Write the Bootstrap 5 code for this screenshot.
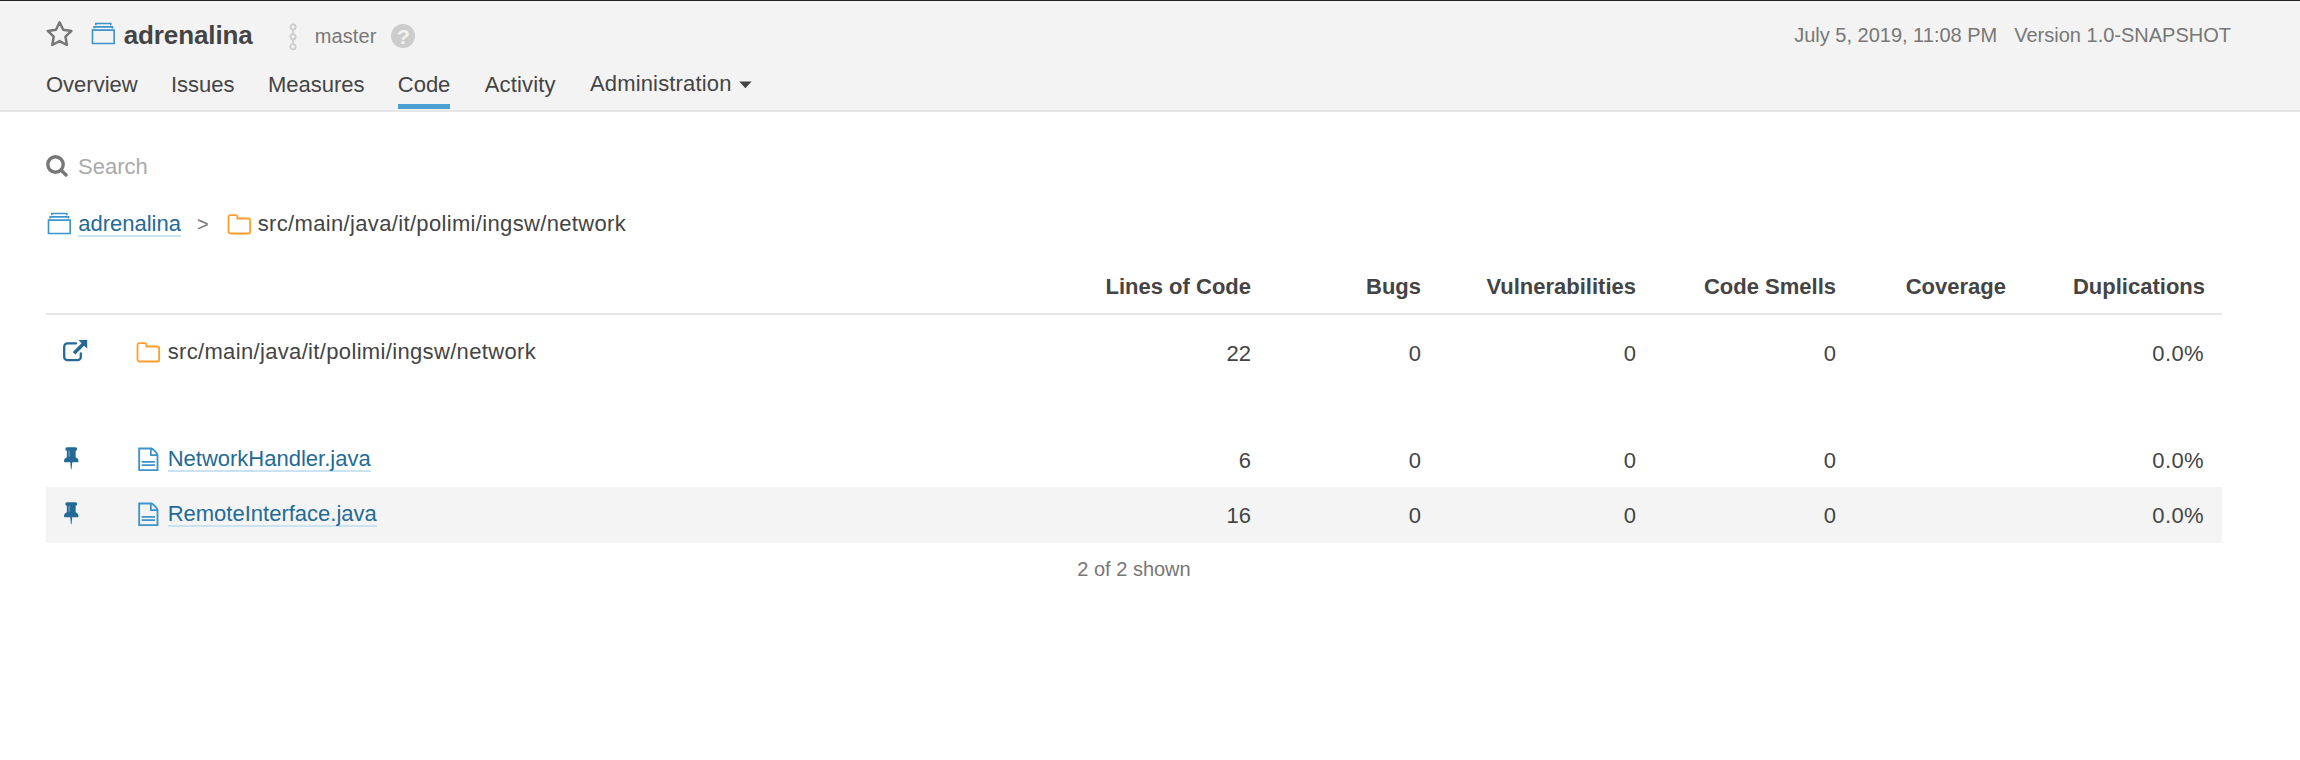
<!DOCTYPE html>
<html lang="en">
<head>
<meta charset="utf-8">
<title>adrenalina - Code</title>
<link rel="stylesheet" href="https://cdn.jsdelivr.net/npm/bootstrap@5.3.0/dist/css/bootstrap.min.css">
<script src="https://cdn.jsdelivr.net/npm/bootstrap@5.3.0/dist/js/bootstrap.bundle.min.js"></script>
<style>
body{font-family:"Liberation Sans",Arial,sans-serif;font-size:22px;line-height:26px;color:#444;background:#fff}
svg{display:block;flex:none}
.ico{width:26.67px;height:26.67px}
.project-bar{height:112px;background:#f3f3f3;border-top:1px solid #222;border-bottom:2px solid #e6e6e6;padding:0 69px 0 46px}
.top-line{height:71px;padding-top:19px}
.project-ico{margin:1px 0 0 16px}
.project-name{font-size:26px;line-height:30px;font-weight:700;letter-spacing:-.1px;margin-left:7px}
.quiet{color:#777;font-size:20px}
.branch{margin:3px 0 0 35px}
.branch-name{margin:3px 0 0 17px;letter-spacing:.1px}
.help-dot{width:24px;height:24px;margin:4px 0 0 15px;background:#ccc;color:#f3f3f3;font-size:21px;font-weight:700;line-height:25px}
.analysis{margin-top:2px;gap:17px}
.tabs{gap:33.3px}
.tabs .nav-link{color:#444;padding:0;height:37px;border-bottom:5px solid transparent;white-space:nowrap}
.tabs .nav-link.active{border-color:#4b9fd5}
.tabs .loose{letter-spacing:.16px;margin-left:1px}
.content{padding:42px 78px 0 46px}
.search-box span{color:#aaa;margin-left:10px}
.crumbs{margin-top:31px;height:26px}
.crumbs .sep{margin:0 17px 0 16px}
.crumbs .name-text{margin-left:5.5px}
.dir-path{letter-spacing:.34px}
.file-link{color:#236a97;text-decoration:none;border-bottom:2px solid #cae3f2;height:26px}
.measures{margin:16px 0 0;table-layout:fixed}
.measures>:not(caption)>*>*{padding:0 17px 0 0;border:0;color:#444;background:transparent;text-align:right;white-space:nowrap;vertical-align:top}
.measures>thead>tr>th{height:61px;border-bottom:2px solid #e6e6e6;padding-top:21px}
.measures>tbody>tr>td{height:55px;padding-top:16px}
.measures>tbody>tr>td:last-child{padding-right:18px;letter-spacing:.4px}
.measures>tbody>tr>td.pin-cell{padding:12px 0 0 12px}
.measures>tbody>tr>td.name-cell{padding:14px 0 0}
.measures>tbody>tr.base-row>td{height:118px;padding-top:26px}
.measures>tbody>tr.base-row>td.pin-cell{padding-left:17px;padding-top:24px}
.measures>tbody>tr.base-row>td.name-cell{padding-top:24px}
.measures>tbody>tr.shade{background:#f4f4f4}
.measures>tbody>tr.shade>td{height:56px}
.measures .name-cell .ico{margin-left:-1px}
.name-text{margin-left:6px}
</style>
</head>
<body>
<svg width="0" height="0" class="position-absolute">
<symbol id="i-project" viewBox="0 0 16 16"><path fill="#3d93cb" d="M14.985 13.988L1 14.005 1.020 5h13.966v8.988zM1.998 5.995l.006 7.020L14.022 13 14 6.004 1.998 5.995zM3 4.500V4h9.996l.004.5h1l-.005-1.497-11.980.003L2 4.500h1zm1-2v-.504h8.002L12 2.500h.997l-.003-1.497H3.006L3 2.500h1z"/></symbol>
<symbol id="i-folder" viewBox="0 0 16 16"><path fill="none" stroke="#ff9e2c" stroke-width="1.100" d="M1.500 3.700a1.200 1.200 0 0 1 1.200-1.200h3a1.200 1.200 0 0 1 1.200 1.200v.8h6.400a1.200 1.200 0 0 1 1.200 1.200v6.600a1.200 1.200 0 0 1-1.200 1.200H2.700a1.200 1.200 0 0 1-1.200-1.200z"/></symbol>
<symbol id="i-file" viewBox="0 0 16 16"><path fill="none" stroke="#3d93cb" stroke-width="1.100" d="M2.500 1.500h7.400c.6 0 3.600 3 3.600 3.800v9.200h-11zM9.500 1.500v4h4M4 9.500h8M4 11.500h8"/></symbol>
<symbol id="i-pin" viewBox="0 0 16 16"><path fill="#236a97" d="M12.300 10.500q0 .5-.5.500H8.550l-.4 4q-.03.220-.2.220t-.2-.22L7.350 11H4.100q-.5 0-.5-.5 0-1.800 1.700-2.500V4q-.9 0-.9-1t.9-1h5.300q.9 0 .9 1t-.9 1v4q1.700.7 1.700 2.500z"/><path d="M6.700 4v3.700" stroke="#7ba6c1" stroke-width=".7"/></symbol>
</svg>

<header class="project-bar">
  <div class="top-line d-flex align-items-start justify-content-between">
    <div class="d-flex align-items-start">
      <svg width="28" height="28" viewBox="0 0 28 28"><path d="M13.600 2.300l3.600 7.400 8.200 1.200-5.900 5.800 1.400 8.300-7.300-3.900-7.300 3.900 1.400-8.300-5.900-5.800 8.200-1.200z" fill="none" stroke="#777" stroke-width="2.500" stroke-linejoin="round"/></svg>
      <svg class="ico project-ico"><use href="#i-project"/></svg>
      <span class="project-name">adrenalina</span>
      <svg class="branch" width="10" height="30" viewBox="0 0 10 30"><g fill="none" stroke="#ccc" stroke-width="1.800"><path d="M5 6.500v4M5 16.500v4"/><circle cx="5" cy="4" r="2.600"/><circle cx="5" cy="13.700" r="2.600"/><circle cx="5" cy="23.700" r="2.600"/></g></svg>
      <span class="quiet branch-name">master</span>
      <span class="help-dot rounded-circle text-center">?</span>
    </div>
    <div class="quiet analysis d-flex"><span>July 5, 2019, 11:08 PM</span><span>Version 1.0-SNAPSHOT</span></div>
  </div>
  <nav class="nav tabs flex-nowrap">
    <a class="nav-link" href="#">Overview</a>
    <a class="nav-link" href="#">Issues</a>
    <a class="nav-link" href="#">Measures</a>
    <a class="nav-link active" href="#">Code</a>
    <a class="nav-link loose" href="#">Activity</a>
    <a class="nav-link loose d-flex" href="#" style="margin-top:-1px">Administration
      <svg width="13" height="8" viewBox="0 0 13 8" style="margin:10px 0 0 7px"><path fill="#444" d="M.2.500h12.400L6.400 7.200z"/></svg></a>
  </nav>
</header>

<main class="content">
  <div class="search-box d-flex">
    <svg width="22" height="23" viewBox="0 0 22 23" style="margin-top:1px"><g fill="none" stroke="#777" stroke-width="3.400"><circle cx="9.500" cy="9.500" r="7.700"/><path d="M15 15l5 5" stroke-linecap="round"/></g></svg>
    <span>Search</span>
  </div>
  <div class="crumbs d-flex">
    <svg class="ico"><use href="#i-project"/></svg>
    <a class="file-link name-text" href="#">adrenalina</a>
    <span class="quiet sep">&gt;</span>
    <svg class="ico"><use href="#i-folder"/></svg>
    <span class="name-text dir-path">src/main/java/it/polimi/ingsw/network</span>
  </div>

  <table class="table measures">
    <colgroup><col style="width:90px"><col style="width:914px"><col style="width:218px"><col style="width:170px"><col style="width:215px"><col style="width:200px"><col style="width:170px"><col style="width:199px"></colgroup>
    <thead>
      <tr><th></th><th></th><th>Lines of Code</th><th>Bugs</th><th>Vulnerabilities</th><th>Code Smells</th><th>Coverage</th><th>Duplications</th></tr>
    </thead>
    <tbody>
      <tr class="base-row">
        <td class="pin-cell"><svg width="26" height="24" viewBox="0 0 26 24"><path fill="none" stroke="#236a97" stroke-width="2.300" stroke-linecap="round" d="M13 4.300H4.500a3.300 3.300 0 0 0-3.300 3.300v10.300a3.300 3.300 0 0 0 3.300 3.300h10a3.300 3.300 0 0 0 3.300-3.300V14.500"/><path fill="#236a97" d="M15.500 1H24.200v8.600l-3.100-2.800-8.800 8.700-2.500-2.500 8.700-8.700z"/></svg></td>
        <td class="name-cell"><div class="d-flex"><svg class="ico"><use href="#i-folder"/></svg><span class="name-text dir-path">src/main/java/it/polimi/ingsw/network</span></div></td>
        <td>22</td><td>0</td><td>0</td><td>0</td><td></td><td>0.0%</td>
      </tr>
      <tr>
        <td class="pin-cell"><svg class="ico"><use href="#i-pin"/></svg></td>
        <td class="name-cell"><div class="d-flex"><svg class="ico"><use href="#i-file"/></svg><a class="file-link name-text" href="#">NetworkHandler.java</a></div></td>
        <td>6</td><td>0</td><td>0</td><td>0</td><td></td><td>0.0%</td>
      </tr>
      <tr class="shade">
        <td class="pin-cell"><svg class="ico"><use href="#i-pin"/></svg></td>
        <td class="name-cell"><div class="d-flex"><svg class="ico"><use href="#i-file"/></svg><a class="file-link name-text" href="#">RemoteInterface.java</a></div></td>
        <td>16</td><td>0</td><td>0</td><td>0</td><td></td><td>0.0%</td>
      </tr>
    </tbody>
  </table>
  <div class="quiet text-center" style="margin-top:13px">2 of 2 shown</div>
</main>
</body>
</html>
